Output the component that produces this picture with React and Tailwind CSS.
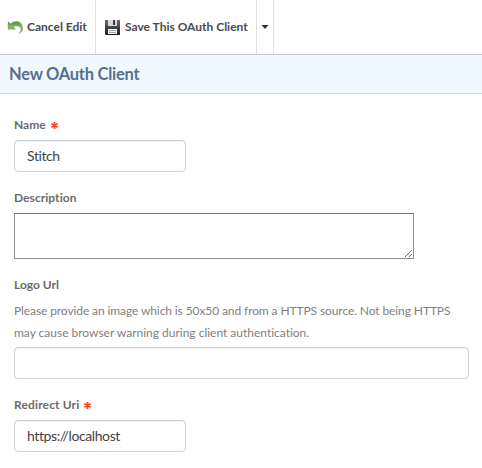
function UndoIcon() {
  return (
    <svg width="16" height="15" viewBox="0 0 16 15" className="shrink-0">
      <defs>
        <linearGradient id="leaf" x1="0" y1="0" x2="0" y2="1">
          <stop offset="0" stopColor="#4f8a35" />
          <stop offset="0.45" stopColor="#8dba6a" />
          <stop offset="1" stopColor="#62963a" />
        </linearGradient>
      </defs>
      <path
        d="M1 1.6 L1 9.2 L8.6 9.2 L6.4 6.8 C9.4 5.2 13 5.8 13.8 8.6 C14.2 10.4 13.2 12.2 11.6 13.6 C14.2 12.8 15.7 10.8 15.7 8 C15.7 1.6 8.6 -0.8 3.4 3.8 Z"
        fill="url(#leaf)"
        stroke="#6f9a52"
        strokeWidth="0.3"
      />
    </svg>
  );
}

function SaveIcon() {
  return (
    <svg width="15" height="15" viewBox="0 0 15 15" className="shrink-0">
      <defs>
        <linearGradient id="disk" x1="0" y1="0" x2="0" y2="1">
          <stop offset="0" stopColor="#6a6a6a" />
          <stop offset="1" stopColor="#1c1c1c" />
        </linearGradient>
      </defs>
      <path d="M0 0 H15 V15 H1 L0 14 Z" fill="url(#disk)" />
      <rect x="3" y="0" width="9" height="6" fill="#d8d8d8" />
      <rect x="8" y="0" width="2" height="5" fill="#3c3c3c" />
      <rect x="3" y="9" width="9" height="5" fill="#f2f2f2" />
      <path d="M4 10.5 H11 M4 12.5 H11" stroke="#a8a8a8" strokeWidth="1" />
    </svg>
  );
}

function Required() {
  return (
    <svg width="7" height="7" viewBox="0 0 7 7" className="mt-px ml-[5px]">
      <path d="M3.5 0 V7 M0.3 1.7 L6.7 5.3 M6.7 1.7 L0.3 5.3" stroke="#ff4422" strokeWidth="1.8" />
    </svg>
  );
}

function Field({ label, labelClass = "", required, children }) {
  return (
    <div className="flex flex-col items-start">
      <label className="mb-1 flex h-[22px] items-center text-[12px] leading-[22px] font-bold text-[#6b6b6b]">
        <span className={labelClass}>{label}</span>
        {required && <Required />}
      </label>
      {children}
    </div>
  );
}

const inputClass =
  "block h-8 rounded-[4px] border border-[#c9d1d9] bg-white px-3 pb-[2px] text-[14px] text-[#444] shadow-[inset_0_1px_1px_rgba(0,0,0,0.06)] outline-none";

export default function App() {
  return (
    <div className="h-[468px] w-[482px] overflow-hidden bg-white font-[Lato,sans-serif] [font-variant-ligatures:none]">
      <div className="flex h-[55px] border-b border-[#c9c9cc] text-[12px] font-bold text-[#4a4a4a]">
        <button className="flex w-24 items-center border-r border-[#e0e0e0] pl-[7px] whitespace-nowrap">
          <UndoIcon />
          <span className="ml-1">Cancel Edit</span>
        </button>
        <button className="flex w-[161px] items-center border-r border-[#e0e0e0] pl-[9px] whitespace-nowrap">
          <SaveIcon />
          <span className="ml-[5px]">Save This OAuth Client</span>
        </button>
        <button className="flex w-[17px] items-center justify-center border-r border-[#e0e0e0]">
          <svg width="8" height="4" viewBox="0 0 8 4">
            <path d="M0.5 0 H7.5 L4 4 Z" fill="#333" />
          </svg>
        </button>
      </div>
      <h1 className="flex h-[39px] items-center border-b border-[#d5dade] bg-[#f0f9ff] pl-[9px] text-[16.5px] font-bold tracking-[-0.25px] text-[#566f8f]">
        New OAuth Client
      </h1>
      <form className="flex flex-col gap-[15px] pt-5 pl-[14px]">
        <Field label="Name" required>
          <input className={`${inputClass} w-[172px] tracking-[-0.4px]`} defaultValue="Stitch" />
        </Field>
        <Field label="Description" labelClass="tracking-[0.05px]">
          <textarea className="block h-[46px] w-[400px] resize border border-[#8f8f8f] border-t-[#767676] bg-white outline-none" />
        </Field>
        <Field label="Logo Url">
          <p className="mb-[3px] w-[455px] text-[12px] leading-[22px] text-[#808080]">
            <span className="tracking-[-0.1px]">
              Please provide an image which is 50x50 and from a HTTPS source. Not being HTTPS
            </span>
            <br />
            <span className="tracking-[-0.01px]">may cause browser warning during client authentication.</span>
          </p>
          <input className={`${inputClass} w-[455px]`} />
        </Field>
        <Field label="Redirect Uri" labelClass="tracking-[0.14px]" required>
          <input className={`${inputClass} w-[172px] tracking-[-0.4px]`} defaultValue="https://localhost" />
        </Field>
      </form>
    </div>
  );
}
